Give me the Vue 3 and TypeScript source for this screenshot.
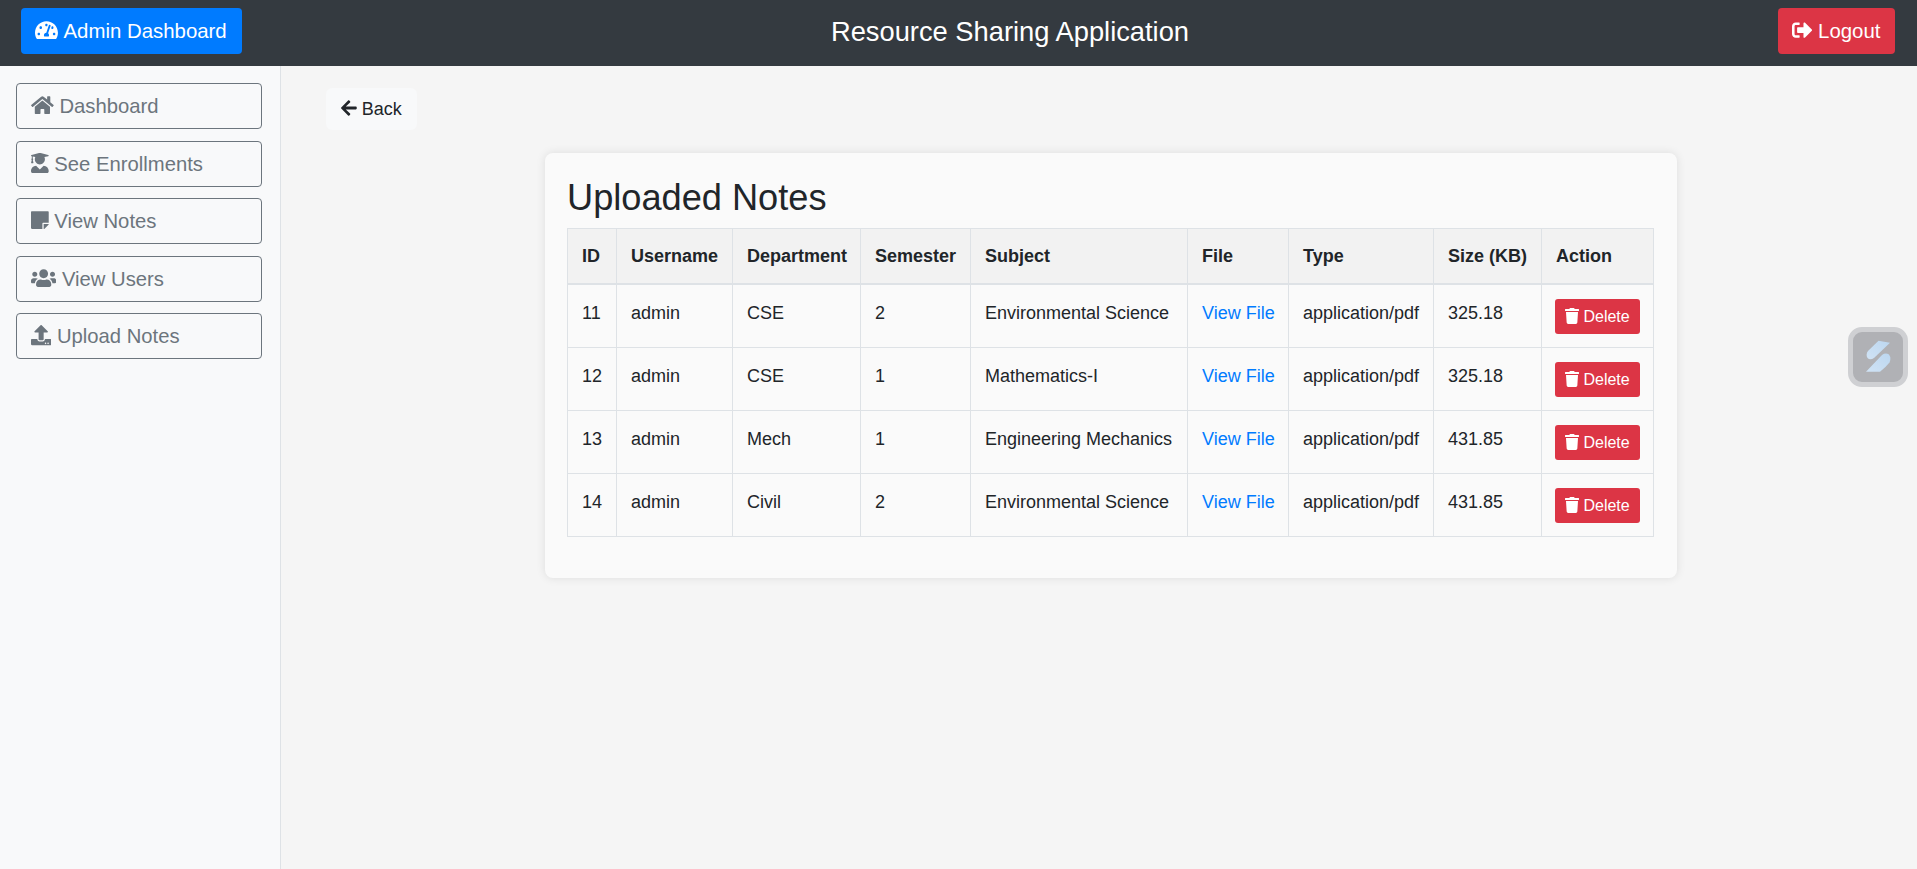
<script setup lang="ts">
const icons: Record<string, { w: number; d: string }> = {
  gauge: { w: 576, d: 'M288 32C128.94 32 0 160.94 0 320c0 52.8 14.25 102.26 39.06 144.8 5.61 9.62 16.3 15.2 27.44 15.2h443c11.14 0 21.83-5.58 27.44-15.2C561.75 422.26 576 372.8 576 320c0-159.06-128.94-288-288-288zm0 64c14.71 0 26.58 10.13 30.32 23.65-1.11 2.26-2.64 4.23-3.45 6.67l-9.22 27.67c-5.13 3.49-10.97 6.01-17.64 6.01-17.67 0-32-14.33-32-32S270.33 96 288 96zM96 384c-17.67 0-32-14.33-32-32s14.33-32 32-32 32 14.33 32 32-14.33 32-32 32zm48-160c-17.67 0-32-14.33-32-32s14.33-32 32-32 32 14.33 32 32-14.33 32-32 32zm246.77-72.41l-61.33 184C343.13 347.33 352 364.54 352 384c0 11.72-3.38 22.55-8.88 32H232.88c-5.5-9.45-8.88-20.28-8.88-32 0-33.94 26.5-61.43 59.9-63.59l61.34-184.01c4.17-12.56 17.73-19.45 30.36-15.17 12.57 4.19 19.35 17.77 15.17 30.36zm14.66 57.2l15.52-46.55c3.47-1.29 7.13-2.23 11.05-2.23 17.67 0 32 14.33 32 32s-14.33 32-32 32c-11.38-.01-20.89-6.28-26.57-15.22zM480 384c-17.67 0-32-14.33-32-32s14.33-32 32-32 32 14.33 32 32-14.33 32-32 32z' },
  home: { w: 576, d: 'M280.37 148.26L96 300.11V464a16 16 0 0 0 16 16l112.06-.29a16 16 0 0 0 15.92-16V368a16 16 0 0 1 16-16h64a16 16 0 0 1 16 16v95.64a16 16 0 0 0 16 16.05L464 480a16 16 0 0 0 16-16V300L295.67 148.26a12.19 12.19 0 0 0-15.3 0zM571.6 251.47L488 182.56V44.05a12 12 0 0 0-12-12h-56a12 12 0 0 0-12 12v72.61L318.47 43a48 48 0 0 0-61 0L4.34 251.47a12 12 0 0 0-1.6 16.9l25.5 31A12 12 0 0 0 45.15 301l235.22-193.74a12.19 12.19 0 0 1 15.3 0L530.9 301a12 12 0 0 0 16.9-1.6l25.5-31a12 12 0 0 0-1.7-16.93z' },
  grad: { w: 448, d: 'M319.4 320.6L224 416l-95.4-95.4C57.1 323.7 0 382.2 0 454.4v9.6c0 26.5 21.5 48 48 48h352c26.5 0 48-21.5 48-48v-9.6c0-72.2-57.1-130.7-128.6-133.8zM13.6 79.8l6.4 1.5v58.4c-7 4.2-12 11.5-12 20.3 0 8.4 4.6 15.4 11.1 19.7L3.5 242c-1.7 6.9 2.1 14 7.6 14h41.8c5.5 0 9.3-7.1 7.6-14l-15.6-62.3C51.4 175.4 56 168.4 56 160c0-8.8-5-16.1-12-20.3V87.1l66 15.9c-8.6 17.2-14 36.4-14 57 0 70.7 57.3 128 128 128s128-57.3 128-128c0-20.6-5.3-39.8-14-57l96.3-23.2c18.2-4.4 18.2-27.1 0-31.5l-190.4-46c-13-3.1-26.7-3.1-39.7 0L13.6 48.2c-18.1 4.4-18.1 27.2 0 31.6z' },
  note: { w: 448, d: 'M312 320h136V56c0-13.3-10.7-24-24-24H24C10.7 32 0 42.7 0 56v400c0 13.3 10.7 24 24 24h264V344c0-13.2 10.8-24 24-24zm129 55l-98 98c-4.5 4.5-10.6 7-17 7h-6V352h128v6.1c0 6.3-2.5 12.4-7 16.9z' },
  users: { w: 640, d: 'M96 224c35.3 0 64-28.7 64-64s-28.7-64-64-64-64 28.7-64 64 28.7 64 64 64zm448 0c35.3 0 64-28.7 64-64s-28.7-64-64-64-64 28.7-64 64 28.7 64 64 64zm32 32h-64c-17.6 0-33.5 7.1-45.1 18.6 40.3 22.1 68.9 62 75.1 109.4h66c17.7 0 32-14.3 32-32v-32c0-35.3-28.7-64-64-64zm-256 0c61.9 0 112-50.1 112-112S381.9 32 320 32 208 82.1 208 144s50.1 112 112 112zm76.8 32h-8.3c-20.8 10-43.9 16-68.5 16s-47.6-6-68.5-16h-8.3C179.6 288 128 339.6 128 403.2V432c0 26.5 21.5 48 48 48h288c26.5 0 48-21.5 48-48v-28.8c0-63.6-51.6-115.2-115.2-115.2zm-223.7-13.4C161.5 263.1 145.6 256 128 256H64c-35.3 0-64 28.7-64 64v32c0 17.7 14.3 32 32 32h65.9c6.3-47.4 34.9-87.3 75.2-109.4z' },
  upload: { w: 512, d: 'M296 384h-80c-13.3 0-24-10.7-24-24V192h-87.7c-17.8 0-26.7-21.5-14.1-34.1L242.3 5.7c7.5-7.5 19.8-7.5 27.3 0l152.2 152.2c12.6 12.6 3.7 34.1-14.1 34.1H320v168c0 13.3-10.7 24-24 24zm216-8v112c0 13.3-10.7 24-24 24H24c-13.3 0-24-10.7-24-24V376c0-13.3 10.7-24 24-24h136v8c0 30.9 25.1 56 56 56h80c30.9 0 56-25.1 56-56v-8h136c13.3 0 24 10.7 24 24zm-124 88c0-11-9-20-20-20s-20 9-20 20 9 20 20 20 20-9 20-20zm64 0c0-11-9-20-20-20s-20 9-20 20 9 20 20 20 20-9 20-20z' },
  out: { w: 512, d: 'M497 273L329 441c-15 15-41 4.5-41-17v-96H152c-13.3 0-24-10.7-24-24v-96c0-13.3 10.7-24 24-24h136V88c0-21.4 25.9-32 41-17l168 168c9.3 9.4 9.3 24.6 0 34zM192 436v-40c0-6.6-5.4-12-12-12H96c-17.7 0-32-14.3-32-32V160c0-17.7 14.3-32 32-32h84c6.6 0 12-5.4 12-12V76c0-6.6-5.4-12-12-12H96c-53 0-96 43-96 96v192c0 53 43 96 96 96h84c6.6 0 12-5.4 12-12z' },
  trash: { w: 448, d: 'M432 32H312l-9.4-18.7A24 24 0 0 0 281.1 0H166.8a23.72 23.72 0 0 0-21.4 13.3L136 32H16A16 16 0 0 0 0 48v32a16 16 0 0 0 16 16h416a16 16 0 0 0 16-16V48a16 16 0 0 0-16-16zM53.2 467a48 48 0 0 0 47.9 45h245.8a48 48 0 0 0 47.9-45L416 128H32z' },
  back: { w: 448, d: 'M257.5 445.1l-22.2 22.2c-9.4 9.4-24.6 9.4-33.9 0L7 273c-9.4-9.4-9.4-24.6 0-33.9L201.4 44.7c9.4-9.4 24.6-9.4 33.9 0l22.2 22.2c9.5 9.5 9.3 25-.4 34.3L136.6 216H424c13.3 0 24 10.7 24 24v32c0 13.3-10.7 24-24 24H136.6l120.5 114.8c9.8 9.3 10 24.8.4 34.3z' },
}

const nav = [
  { label: 'Dashboard', icon: 'home' },
  { label: 'See Enrollments', icon: 'grad' },
  { label: 'View Notes', icon: 'note' },
  { label: 'View Users', icon: 'users' },
  { label: 'Upload Notes', icon: 'upload' },
]

const columns = [
  { label: 'ID', width: 49 },
  { label: 'Username', width: 116 },
  { label: 'Department', width: 128 },
  { label: 'Semester', width: 110 },
  { label: 'Subject', width: 217 },
  { label: 'File', width: 101 },
  { label: 'Type', width: 145 },
  { label: 'Size (KB)', width: 108 },
  { label: 'Action', width: 112 },
]

const notes = [
  { id: 11, user: 'admin', dept: 'CSE', sem: 2, subject: 'Environmental Science', size: '325.18' },
  { id: 12, user: 'admin', dept: 'CSE', sem: 1, subject: 'Mathematics-I', size: '325.18' },
  { id: 13, user: 'admin', dept: 'Mech', sem: 1, subject: 'Engineering Mechanics', size: '431.85' },
  { id: 14, user: 'admin', dept: 'Civil', sem: 2, subject: 'Environmental Science', size: '431.85' },
]
</script>

<template>
  <div class="page">
    <header class="topbar">
      <a class="btn brand">
        <svg class="ico gap" :viewBox="`0 0 ${icons.gauge.w} 512`"><path :d="icons.gauge.d" /></svg>
        Admin Dashboard
      </a>
      <div class="title">Resource Sharing Application</div>
      <a class="btn logout">
        <svg class="ico" :viewBox="`0 0 ${icons.out.w} 512`"><path :d="icons.out.d" /></svg>
        Logout
      </a>
    </header>
    <div class="body-row">
      <aside class="sidebar">
        <a v-for="n in nav" :key="n.label" class="side-link">
          <svg class="ico" :viewBox="`0 0 ${icons[n.icon].w} 512`"><path :d="icons[n.icon].d" /></svg>
          {{ n.label }}
        </a>
      </aside>
      <main class="main">
        <a class="back">
          <svg class="ico" :viewBox="`0 0 ${icons.back.w} 512`"><path :d="icons.back.d" /></svg>
          Back
        </a>
        <section class="card">
          <h2>Uploaded Notes</h2>
          <table>
            <colgroup>
              <col v-for="c in columns" :key="c.label" :style="{ width: c.width + 'px' }" />
            </colgroup>
            <thead>
              <tr><th v-for="c in columns" :key="c.label">{{ c.label }}</th></tr>
            </thead>
            <tbody>
              <tr v-for="r in notes" :key="r.id">
                <td>{{ r.id }}</td>
                <td>{{ r.user }}</td>
                <td>{{ r.dept }}</td>
                <td>{{ r.sem }}</td>
                <td>{{ r.subject }}</td>
                <td><a class="file">View File</a></td>
                <td>application/pdf</td>
                <td>{{ r.size }}</td>
                <td>
                  <button class="del">
                    <svg class="ico" :viewBox="`0 0 ${icons.trash.w} 512`"><path :d="icons.trash.d" /></svg>
                    Delete
                  </button>
                </td>
              </tr>
            </tbody>
          </table>
        </section>
      </main>
    </div>
    <div class="widget">
      <svg class="logo" viewBox="0 0 40 40" width="40" height="40">
        <defs>
          <linearGradient id="sg" x1="0" y1="1" x2="1" y2="0">
            <stop offset="0" stop-color="#d0e3f5" />
            <stop offset="1" stop-color="#bcd7f0" />
          </linearGradient>
        </defs>
        <path d="M20.5 3.7 L32 5.7 L16 21 Q12 23.5 9.5 21 Q7.5 17 10 14 Z" fill="url(#sg)" />
        <path d="M8 34.7 L24 18 Q27.5 15.5 31 17.5 Q33.5 21 31.5 25.5 Q28 30 22 34.7 Z" fill="url(#sg)" />
      </svg>
    </div>
  </div>
</template>

<style>
html, body { margin: 0; background: #f5f5f5; }
</style>

<style scoped>
.page {
  position: relative;
  height: 869px;
  overflow: hidden;
  font-family: "Liberation Sans", Arial, sans-serif;
  font-size: 16px;
  line-height: 1.5;
  color: #212529;
  background: #f5f5f5;
  display: flex;
  flex-direction: column;
}
.ico { height: 1em; fill: currentColor; vertical-align: -0.125em; }
.ico.gap { margin-right: 1px; }

.topbar {
  flex: none;
  height: 66px;
  box-sizing: border-box;
  padding: 8px 22px 12px 21px;
  background: #343a40;
  display: flex;
  align-items: center;
  justify-content: space-between;
}
.btn {
  display: block;
  box-sizing: border-box;
  height: 46px;
  border-radius: 4px;
  font-size: 20.4px;
  line-height: 46px;
  color: #fff;
  white-space: nowrap;
}
.brand { background: #007bff; width: 221px; padding-left: 14px; }
.logout { background: #dc3545; width: 117px; padding-left: 14px; }
.title { color: #fff; font-size: 27.3px; line-height: 40px; margin-top: 2px; }

.body-row { flex: 1; display: flex; min-height: 0; }
.sidebar {
  flex: none;
  width: 281px;
  box-sizing: border-box;
  background: #f8f9fa;
  border-right: 1px solid #dee2e6;
  padding: 17px 18px 0 16px;
  display: flex;
  flex-direction: column;
  gap: 11.25px;
}
.side-link {
  display: block;
  box-sizing: border-box;
  height: 46.25px;
  border: 1px solid #6c757d;
  border-radius: 4px;
  color: #6c757d;
  font-size: 20.25px;
  line-height: 44px;
  padding-left: 14px;
  white-space: nowrap;
}

.main { flex: 1; min-width: 0; padding: 22px 0 0 45px; }
.back {
  display: inline-block;
  box-sizing: border-box;
  height: 42px;
  width: 91px;
  padding-left: 15px;
  background: #f8f9fa;
  border-radius: 6px;
  font-size: 18px;
  line-height: 42px;
  color: #212529;
  vertical-align: top;
}
.card {
  box-sizing: border-box;
  width: 1132px;
  height: 425px;
  margin: 23px 0 0 219px;
  padding: 23px 23px 0 22px;
  background: #fafafa;
  border-radius: 8px;
  box-shadow: 0 0 10px rgba(0, 0, 0, 0.1);
}
h2 {
  margin: 0 0 9px;
  font-size: 36.2px;
  font-weight: 400;
  line-height: 43px;
  color: #212529;
}
table {
  table-layout: fixed;
  width: 1086px;
  border-collapse: collapse;
  font-size: 18px;
}
th, td {
  border: 1px solid #dee2e6;
  padding: 14px 14px 13px;
  text-align: left;
  vertical-align: top;
  white-space: nowrap;
}
thead th { background: #f2f2f2; font-weight: 700; border-bottom-width: 2px; height: 55px; box-sizing: border-box; }
tbody td { height: 63px; box-sizing: border-box; line-height: 29px; }
.file { color: #007bff; }
.del {
  display: block;
  box-sizing: border-box;
  width: 85px;
  height: 35px;
  margin-left: -1px;
  padding: 0 0 0 10px;
  border: 0;
  border-radius: 3px;
  background: #dc3545;
  color: #fff;
  font: 16px/35px "Liberation Sans", Arial, sans-serif;
  text-align: left;
  white-space: nowrap;
}

.widget {
  position: absolute;
  left: 1848px;
  top: 327px;
  width: 60px;
  height: 60px;
  box-sizing: border-box;
  border: 5px solid #cfd0d3;
  border-radius: 14px;
  background: #b0b1b5;
  display: flex;
  align-items: center;
  justify-content: center;
}
.logo { filter: blur(0.4px); }
</style>
